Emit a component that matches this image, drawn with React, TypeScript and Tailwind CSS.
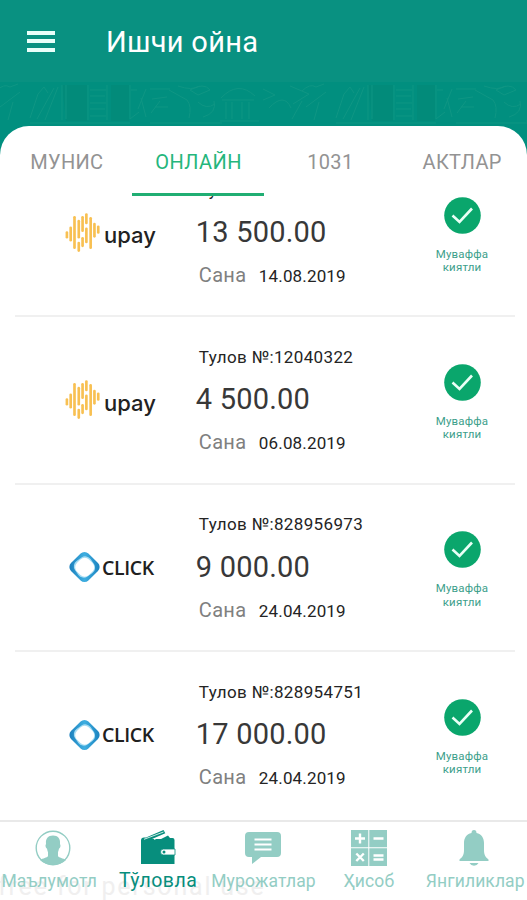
import type { ReactNode } from "react";

type Provider = "upay" | "click";

interface Payment {
  provider: Provider;
  number: string;
  amount: string;
  date: string;
}

const payments: Payment[] = [
  { provider: "upay", number: "12288323", amount: "13 500.00", date: "14.08.2019" },
  { provider: "upay", number: "12040322", amount: "4 500.00", date: "06.08.2019" },
  { provider: "click", number: "828956973", amount: "9 000.00", date: "24.04.2019" },
  { provider: "click", number: "828954751", amount: "17 000.00", date: "24.04.2019" },
];

export default function App() {
  return (
    <div className="relative flex h-[900px] w-[527px] flex-col overflow-hidden bg-[#018f7f] font-['Roboto','Noto_Sans',sans-serif]">
      <header className="flex h-[82px] shrink-0 items-center bg-[#099181] pl-[27px] text-white">
        <div className="flex w-[28px] flex-col gap-[4.5px]">
          <span className="h-[4px] bg-[#e9fffa]" />
          <span className="h-[4px] bg-[#e9fffa]" />
          <span className="h-[4px] bg-[#e9fffa]" />
        </div>
        <h1 className="ml-[51px] mt-[3px] text-[29px] leading-none font-normal tracking-[0.3px]">
          Ишчи ойна
        </h1>
      </header>

      <Pattern />

      <main className="flex min-h-0 flex-1 flex-col overflow-hidden rounded-t-[29px] bg-white">
        <div className="grid h-[70px] shrink-0 grid-cols-4">
          <Tab>МУНИС</Tab>
          <Tab active>ОНЛАЙН</Tab>
          <Tab>1031</Tab>
          <Tab>АКТЛАР</Tab>
        </div>

        {/* List is scrolled a little under the tabs */}
        <div className="min-h-0 flex-1 overflow-hidden">
          <div className="-mt-[46px]">
            {payments.map((p) => (
              <PaymentRow key={p.number} payment={p} />
            ))}
          </div>
        </div>
      </main>

      <nav className="relative flex h-[80px] shrink-0 border-t-[2px] border-[#e9e9e9] bg-white text-[#93cdc4]">
        <span className="absolute top-[52px] -left-[2px] text-[25px] leading-none whitespace-nowrap text-[#f0efef] tracking-[1.8px]">
          free for personal use
        </span>
        <NavItem label="Маълумотл" labelClass="-ml-[7px] text-[17.5px] tracking-[0.1px]">
          <UserIcon />
        </NavItem>
        <NavItem label="Тўловла" labelClass="text-[19.5px] tracking-[0.45px] text-[#078e7d]">
          <WalletIcon />
        </NavItem>
        <NavItem label="Мурожатлар" labelClass="text-[17.5px] tracking-[0.15px]">
          <ChatIcon />
        </NavItem>
        <NavItem label="Ҳисоб" labelClass="text-[17.5px] tracking-[0.15px]">
          <CalcIcon />
        </NavItem>
        <NavItem label="Янгиликлар" labelClass="ml-[2px] text-[17.5px] tracking-[0.1px]">
          <BellIcon />
        </NavItem>
      </nav>
    </div>
  );
}

function Tab({ active, children }: { active?: boolean; children: ReactNode }) {
  return (
    <div
      className={
        active
          ? "flex items-center justify-center border-b-[3px] border-[#20ae73] pt-[5px] pl-[2px] text-[20px] tracking-[0.4px] text-[#25b67c]"
          : "flex items-center justify-center border-b-[3px] border-transparent pt-[5px] pl-[2px] text-[20px] tracking-[0.3px] text-[#939393]"
      }
    >
      {children}
    </div>
  );
}

function PaymentRow({ payment }: { payment: Payment }) {
  return (
    <div className="mr-[12px] ml-[15px] flex h-[167.4px] border-b-[2px] border-[#f0f0f0] last:border-transparent">
      <div className="flex w-[183px] items-center pl-[50px]">
        {payment.provider === "upay" ? <UpayLogo /> : <ClickLogo />}
      </div>
      <div className="flex w-[213px] flex-col whitespace-nowrap">
        <div className="mt-[30.5px] ml-[2px] text-[17px] leading-[18px] tracking-[0.35px] text-[#242424]">
          Тулов №:{payment.number}
        </div>
        <div className="mt-[16.5px] -ml-[1px] text-[29px] leading-[34px] tracking-[0.2px] text-[#383838]">
          {payment.amount}
        </div>
        <div className="mt-[15px] ml-[2px] flex items-baseline">
          <span className="w-[60px] text-[20px] leading-[22px] tracking-[0.3px] text-[#808080]">
            Сана
          </span>
          <span className="text-[17px] leading-[22px] tracking-[0.15px] text-[#242424]">
            {payment.date}
          </span>
        </div>
      </div>
      <div className="ml-[1px] flex w-[106px] shrink-0 flex-col items-center pt-[46.500px]">
        <svg width="37" height="37" viewBox="0 0 37 37" fill="none">
          <circle cx="18.5" cy="18.5" r="18.3" fill="#0aa66c" />
          <path d="M8.5 18.5 15.5 25 28 11.5" stroke="#e9fff6" strokeWidth="2.6" />
        </svg>
        <div className="mt-[14px] text-center text-[11.5px] leading-[13.5px] tracking-[0.2px] text-[#3da08b]">
          Муваффа
          <br />
          киятли
        </div>
      </div>
    </div>
  );
}

function UpayLogo() {
  // x, top, bottom of each bar
  const bars = [
    [2, 20, 25],
    [6, 15, 28],
    [10, 4, 36],
    [14.5, 8, 25],
    [14.5, 31, 39],
    [18.5, 4, 18],
    [18.5, 26, 34],
    [22.5, 1, 10],
    [22.5, 16, 30],
    [27, 5, 36],
    [31, 11, 24],
    [35, 14, 20],
  ];
  return (
    <div className="flex items-center">
      <svg width="38" height="40" viewBox="0 0 40 41" fill="none" stroke="#f8c052" strokeWidth="2.8" strokeLinecap="round">
        {bars.map(([x, y1, y2]) => (
          <path key={`${x}-${y1}`} d={`M${x} ${y1}V${y2}`} />
        ))}
      </svg>
      <span className="mt-[5px] ml-[1px] font-['Inter','Noto_Sans',sans-serif] text-[22px] leading-none font-medium text-[#222]">
        upay
      </span>
    </div>
  );
}

function ClickLogo() {
  return (
    <div className="ml-[3px] flex items-center">
      <svg width="33" height="34" viewBox="0.5 0 33 34">
        <defs>
          <linearGradient id="click-ring" x1="1" y1="0" x2="0" y2="1">
            <stop offset="0" stopColor="#167dbb" />
            <stop offset="0.5" stopColor="#3eaee0" />
            <stop offset="1" stopColor="#1679b8" />
          </linearGradient>
        </defs>
        <rect x="4.7" y="4.7" width="24.6" height="24.6" rx="5.5" transform="rotate(45 17 17)" fill="url(#click-ring)" />
        <rect x="7.5" y="7.5" width="19" height="19" rx="6.5" transform="rotate(55 17 17)" fill="#a5dcf3" />
        <rect x="8.8" y="8.5" width="17" height="17" rx="6" transform="rotate(45 17 17)" fill="#fff" />
      </svg>
      <span className="ml-[1px] font-['Open_Sans','Noto_Sans',sans-serif] text-[19.5px] leading-none font-semibold tracking-[-0.4px] text-[#202020]">
        CLICK
      </span>
    </div>
  );
}

function Pattern() {
  return (
    <svg className="h-[44px] w-[527px] shrink-0" width="527" height="44" viewBox="0 0 527 44" fill="none">
      <defs>
        <g id="motif">
          <path d="M62 3h25v36H66zM111 3h18v36h-18z" fill="#028b7a" />
          <g stroke="#0f9684" strokeWidth="1">
            <path d="M-4 9q8-8 14-4l8-3M0 25l20-15M8 38l5-18M30 36l8-24 6-7 4 6M37 37 54 6M45 38 58 5M62 3v35M66 3v34" />
            <path d="M88 3v35M90 8h16M90 14h15M90 21h16M90 27h15M90 34h16M107 3v35M130 3v34l9-7M131 8h6M138 27l8-20M146 35l-5-19M150 7h20M152 17l15-2M151 31l9-12M155 25h13M169 8l18 10q5 6 2 18M178 4q14 5 22 0" />
            <path d="M190 8q14-8 20 0l-12 5zM198 20q8 8 17 2M203 35q14-4 11-16M221 16q17-18 34-2M222 18h32M226 20v17M232 20v17M242 20v17M249 20v17M220 39h39M263 7l12 6-12 5M269 26q15-16 22 0M290 4l19 8-16 10M292 37l10-18M30 41h100M150 41h72" />
          </g>
        </g>
      </defs>
      <use href="#motif" />
      <use href="#motif" x="306" />
    </svg>
  );
}

function NavItem({
  label,
  labelClass,
  children,
}: {
  label: string;
  labelClass: string;
  children: ReactNode;
}) {
  return (
    <div className="relative flex w-[105.4px] flex-col items-center pt-[7px]">
      <div className="flex h-[38px] w-[40px] items-center justify-center">{children}</div>
      <span className={`mt-[3px] leading-[22px] whitespace-nowrap ${labelClass}`}>{label}</span>
    </div>
  );
}

function UserIcon() {
  return (
    <svg width="36" height="36" viewBox="0 0 36 36" fill="none">
      <circle cx="18" cy="18" r="16.8" stroke="currentColor" strokeWidth="1.4" />
      <path
        d="M18 5.5c-5 0-7.5 3.5-7 8 .1 1-.8 1.3-.4 3 .3 1.5 1.2 1.5 1.5 2.5.3 1.6.5 2.3.9 3V26c-1 2-5 2-8 4C8.5 33.5 13 35 18 35s9.5-1.5 13-5c-3-2-7-2-8-4v-4c.4-.7.6-1.4.9-3 .3-1 1.2-1 1.5-2.5.4-1.7-.5-2-.4-3 .5-4.500-2-8-7-8Z"
        fill="currentColor"
      />
    </svg>
  );
}

function WalletIcon() {
  return (
    <svg width="36" height="36" viewBox="0 0 36 36" fill="#078e7d">
      <path d="M1 10.5q0-3 3-3h2L23.5 0l1.8 3.2L12 9H21l7-3.5 2 2.5h2.5q2 0 2 2V34H1Z" />
      <path d="M4 9.3 23.5 2M14 9.5l10-4" stroke="#fff" strokeWidth="0.8" />
      <path d="M23.5 19H35v6H23.5a3 3 0 0 1 0-6Z" fill="#fff" stroke="#078e7d" strokeWidth="0.8" />
      <circle cx="24" cy="22" r="1.5" />
    </svg>
  );
}

function ChatIcon() {
  return (
    <svg width="36" height="34" viewBox="0 0 36 34">
      <path d="M4 1h28q4 0 4 4v17q0 4-4 4H16l-9 7v-7H4q-4 0-4-4V5q0-4 4-4Z" fill="currentColor" />
      <path d="M9.5 8.5h17M9.5 13.5h17M9.5 18.5h17" stroke="#fff" strokeWidth="1.8" />
    </svg>
  );
}

function CalcIcon() {
  return (
    <svg width="36" height="36" viewBox="0 0 36 36">
      <path d="M0 0h17.3v17.3H0zM18.3 0H36v17.3H18.3zM0 18.3h17.3V36H0zM18.3 18.3H36V36H18.3z" fill="currentColor" />
      <path
        d="M4 8.5h10M9 3.5v10M22.5 8.5h10M5.3 23.5l7.5 7.5M12.8 23.5 5.3 31M22.5 25.5h10M22.5 29.5h10"
        stroke="#fff"
        strokeWidth="2.4"
      />
    </svg>
  );
}

function BellIcon() {
  return (
    <svg width="30" height="36" viewBox="0 0 30 36" fill="currentColor">
      <path d="M15 0q2.5 0 2.5 3c5 1.2 7.5 5 7.5 10v7c0 5 1.5 7 4.5 9.5V31H.5v-1.5C3.5 27 5 25 5 20v-7c0-5 2.5-8.8 7.5-10q0-3 2.5-3Z" />
      <path d="M10.5 33h9q-1.5 2.8-4.5 2.8T10.5 33Z" />
    </svg>
  );
}
